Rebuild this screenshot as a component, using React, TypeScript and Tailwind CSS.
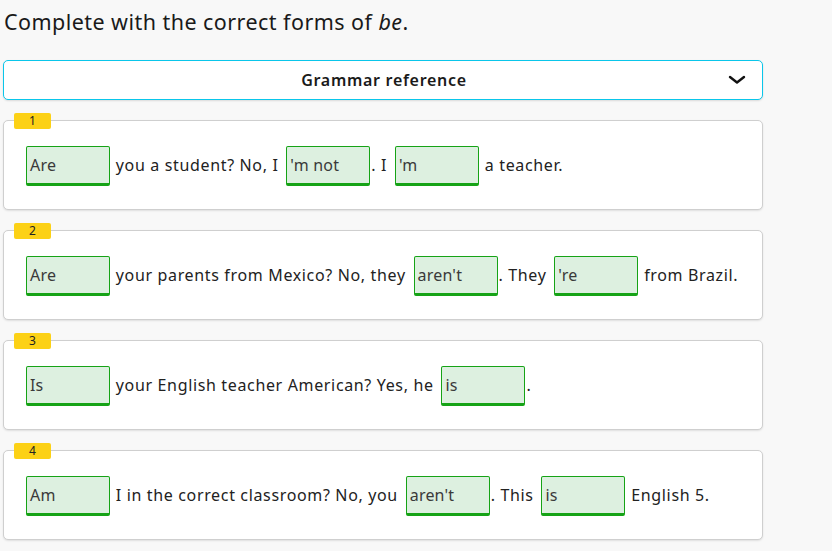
import React from "react";

type Part = string | { a: string };

const items: { n: number; parts: Part[] }[] = [
  { n: 1, parts: [{ a: "Are" }, " you a student? No, I ", { a: "'m not" }, ". I ", { a: "'m" }, " a teacher."] },
  { n: 2, parts: [{ a: "Are" }, " your parents from Mexico? No, they ", { a: "aren't" }, ". They ", { a: "'re" }, " from Brazil."] },
  { n: 3, parts: [{ a: "Is" }, " your English teacher American? Yes, he ", { a: "is" }, "."] },
  { n: 4, parts: [{ a: "Am" }, " I in the correct classroom? No, you ", { a: "aren't" }, ". This ", { a: "is" }, " English 5."] },
];

function Blank({ v, first }: { v: string; first: boolean }) {
  return (
    <span
      className={
        first
          ? "inline-flex h-[40px] w-[84px] items-center rounded-[2px] border border-b-[3px] border-[#16a316] bg-[#ddf0e0] pl-[3px] align-middle text-[16px] leading-[20px] tracking-[0.2px] text-[#3a3a3a] mr-[1px]"
          : "inline-flex h-[40px] w-[84px] items-center rounded-[2px] border border-b-[3px] border-[#16a316] bg-[#ddf0e0] pl-[3px] align-middle text-[16px] leading-[20px] tracking-[0.2px] text-[#3a3a3a] ml-[3px] mr-[1px]"
      }
    >
      {v}
    </span>
  );
}

export default function App() {
  return (
    <div
      className="min-h-[551px] w-[832px] bg-[#f8f8f8] pl-[3px] pt-[6px]"
      style={{ fontFamily: '"Noto Sans", "Open Sans", sans-serif' }}
    >
      <h1 className="pl-[1px] text-[21.5px] leading-[32px] tracking-[0.45px] text-[#1a1a1a]">
        Complete with the correct forms of <i>be</i>.
      </h1>
      <div className="mt-[22px] flex h-[40px] w-[760px] items-center rounded-[5px] border border-[#0ac6ea] bg-white shadow-[0_1px_2px_rgba(0,0,0,0.12)]">
        <div className="flex-1 pl-[36px] text-center text-[16px] font-semibold tracking-[0.7px] text-[#1a1a1a]">
          Grammar reference
        </div>
        <svg width="18" height="10" viewBox="0 0 18 10" className="mr-[16px]">
          <path d="M2 2 L9 7.5 L16 2" fill="none" stroke="#111" strokeWidth="2.4" strokeLinecap="round" strokeLinejoin="round" />
        </svg>
      </div>
      <div className="mt-[13px] flex w-[760px] flex-col gap-[13px]">
        {items.map((it) => (
          <div key={it.n} className="flex flex-col">
            <div className="relative z-10 ml-[11px] mb-[-9px] flex h-[16px] w-[37px] items-center justify-center rounded-[2px] bg-[#fcd116] text-[12px] leading-none text-[#222]">
              {it.n}
            </div>
            <div className="flex h-[90px] items-center rounded-[5px] border border-[#cfcfcf] bg-white pl-[22px] shadow-[0_1px_2px_rgba(0,0,0,0.1)]">
              <div className="whitespace-pre pt-[1px] text-[16px] leading-[40px] tracking-[0.65px] text-[#222]">
                {it.parts.map((p, i) =>
                  typeof p === "string" ? <span key={i}>{p}</span> : <Blank key={i} v={p.a} first={i === 0} />
                )}
              </div>
            </div>
          </div>
        ))}
      </div>
    </div>
  );
}
